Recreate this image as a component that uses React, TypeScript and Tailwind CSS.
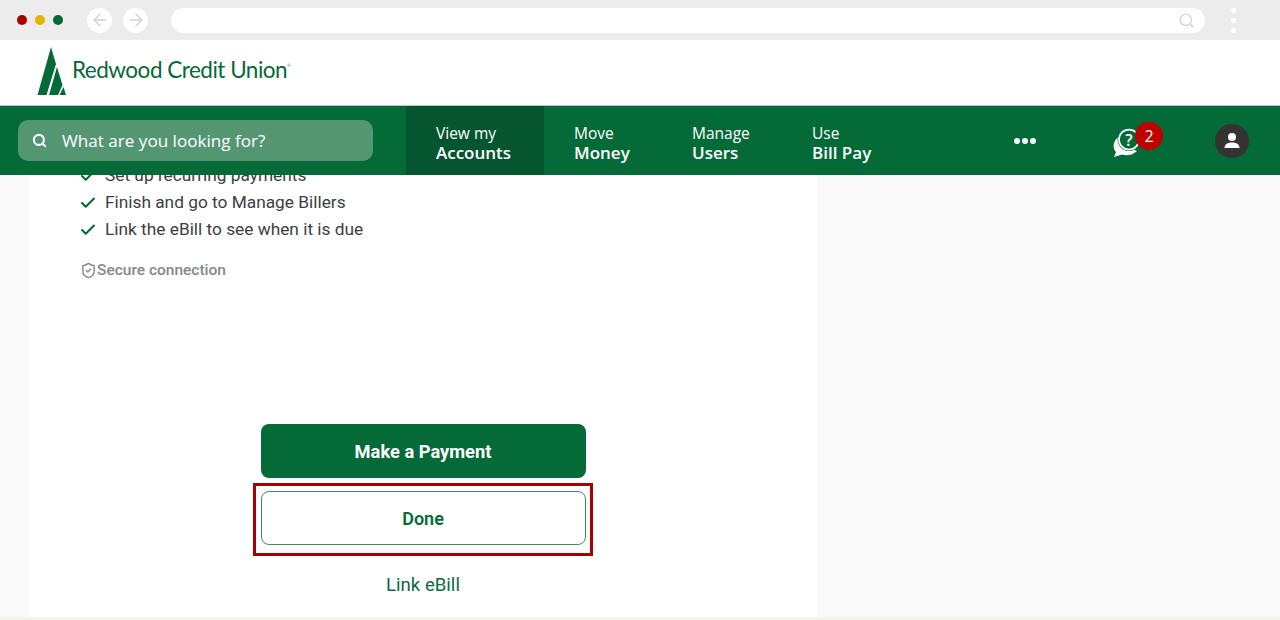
import React from 'react';
import { ArrowLeft, ArrowRight, Check, Search, ShieldCheck } from 'lucide-react';

const NAV_ITEMS = [
  { top: 'View my', bottom: 'Accounts', active: true, width: 'w-[138px]' },
  { top: 'Move', bottom: 'Money', active: false, width: 'w-[118px]' },
  { top: 'Manage', bottom: 'Users', active: false, width: 'w-[120px]' },
  { top: 'Use', bottom: 'Bill Pay', active: false, width: 'w-[120px]' },
];

const STEPS = ['Set up recurring payments', 'Finish and go to Manage Billers', 'Link the eBill to see when it is due'];

const BrowserBar = () => (
  <div className="h-10 bg-[#ececec] flex items-center">
    <div className="flex items-center gap-[8px] ml-[17px]">
      <span className="w-[10px] h-[10px] rounded-full bg-[#a80000]" />
      <span className="w-[10px] h-[10px] rounded-full bg-[#e2b500]" />
      <span className="w-[10px] h-[10px] rounded-full bg-[#046a38]" />
    </div>
    <div className="flex items-center gap-[11px] ml-[24px]">
      <span className="w-[25px] h-[25px] rounded-full bg-white flex items-center justify-center text-[#d4d4d4]">
        <ArrowLeft size={20} strokeWidth={1.75} />
      </span>
      <span className="w-[25px] h-[25px] rounded-full bg-white flex items-center justify-center text-[#d4d4d4]">
        <ArrowRight size={20} strokeWidth={1.75} />
      </span>
    </div>
    <div className="ml-[23px] w-[1034px] h-[25px] rounded-full bg-white flex items-center justify-end pr-[10px] text-[#d4d4d4]">
      <Search size={17} strokeWidth={2} />
    </div>
    <div className="ml-[26px] flex flex-col gap-[5px]">
      <span className="w-[5px] h-[5px] rounded-full bg-white" />
      <span className="w-[5px] h-[5px] rounded-full bg-white" />
      <span className="w-[5px] h-[5px] rounded-full bg-white" />
    </div>
  </div>
);

const Logo = () => (
  <div className="h-[65px] bg-white flex items-center pl-[37px]">
    <svg width="30" height="48" viewBox="0 0 30 48" className="-mt-[4px] text-[#046a38]" fill="currentColor">
      <path d="M14 0 L19 17 L9.5 48 L0.5 48 Z" />
      <path d="M20 20 L25.5 38 L21 48 L12 48 Z" />
      <path d="M26.5 40 L29 48 L22.5 48 Z" />
    </svg>
    <span className="ml-[5px] -mt-[5px] font-['Lato',sans-serif] text-[22.5px] tracking-[-0.5px] text-[#046a38] leading-none">
      Redwood Credit Union<sup className="text-[4px] align-super">®</sup>
    </span>
  </div>
);

const NavBar = () => (
  <header className="relative z-10 h-[70px] bg-[#046a38] border-t border-[#b9c9bf] flex items-stretch font-['Open_Sans',sans-serif] text-white">
    <div className="ml-[18px] mt-[14px] w-[355px] h-[41px] rounded-[10px] bg-[#559672] flex items-center">
      <Search size={15} strokeWidth={3.25} className="ml-[14px]" />
      <span className="ml-[15px] text-[17.1px]">What are you looking for?</span>
    </div>
    <nav className="ml-[33px] flex items-stretch">
      {NAV_ITEMS.map(item => (
        <a
          key={item.bottom}
          href="#"
          className={`${item.width} pl-[30px] pt-[5px] flex flex-col justify-center ${item.active ? 'bg-[#045530]' : ''}`}
        >
          <span className="text-[15.5px] leading-[20px]">{item.top}</span>
          <span className="text-[17px] leading-[20px] font-semibold">{item.bottom}</span>
        </a>
      ))}
    </nav>
    <div className="ml-[112px] flex items-center gap-[2px] h-full">
      <span className="w-[6px] h-[6px] rounded-full bg-white" />
      <span className="w-[6px] h-[6px] rounded-full bg-white" />
      <span className="w-[6px] h-[6px] rounded-full bg-white" />
    </div>
    <div className="relative ml-[77px] w-[30px] self-center">
      <svg width="30" height="30" viewBox="0 0 30 30" className="mt-[2px]">
        <path d="M7 9 C0 13 -1 21 3 25 L1 30 L9 27.5 C14 29 20 28 24 24 L14 20 Z" fill="#fff" />
        <circle cx="16" cy="12.5" r="11.5" fill="#046a38" />
        <circle cx="16" cy="12.5" r="10" fill="none" stroke="#fff" strokeWidth="1.75" />
        <text x="16" y="18.5" textAnchor="middle" fontSize="16" fontWeight="600" fill="#fff" fontFamily="Open Sans, sans-serif">?</text>
      </svg>
      <span className="absolute -top-[3px] left-[22px] w-7 h-7 rounded-full bg-[#c00000] flex items-center justify-center text-[16px]">
        2
      </span>
    </div>
    <div className="ml-[72px] self-center w-[34px] h-[34px] rounded-full bg-[#333333] flex items-center justify-center">
      <svg width="18" height="18" viewBox="0 0 18 18" fill="#fff">
        <circle cx="9" cy="5" r="4" />
        <path d="M1.5 16 C1.5 12 5 10.5 9 10.5 C13 10.5 16.5 12 16.5 16 Z" />
      </svg>
    </div>
  </header>
);

export default function App() {
  return (
    <div className="w-[1280px] h-[620px] overflow-hidden bg-[#f9f9f9] font-['Roboto',sans-serif]">
      <BrowserBar />
      <Logo />
      <NavBar />
      <main className="ml-[29px] w-[788px] h-[442px] bg-white flex flex-col items-center">
        <ul className="self-start ml-[50px] -mt-[13px] text-[17.3px] text-[#3c4043]">
          {STEPS.map(step => (
            <li key={step} className="h-[27px] flex items-center">
              <Check size={18} strokeWidth={2.75} className="text-[#046a38]" />
              <span className="ml-[8px]">{step}</span>
            </li>
          ))}
        </ul>
        <div className="self-start ml-[51px] mt-[16px] flex items-center text-[15.5px] font-medium text-[#85888b]">
          <ShieldCheck size={17} strokeWidth={2} />
          <span>Secure connection</span>
        </div>
        <button className="mt-[142px] w-[325px] h-[54px] rounded-lg bg-[#046a38] text-white text-[18.3px] font-bold">
          Make a Payment
        </button>
        <div className="mt-[5px] w-[340px] h-[73px] border-[3px] border-[#a80000] flex justify-center pt-[5px]">
          <button className="block w-[325px] h-[54px] rounded-lg bg-white border border-[#3f8a63] text-[#046a38] text-[18px] font-semibold">
            Done
          </button>
        </div>
        <a href="#" className="mt-[16px] text-[18.6px] text-[#0a6b45]">
          Link eBill
        </a>
      </main>
      <div className="h-[3px] bg-[#f3f5ec]" />
    </div>
  );
}
